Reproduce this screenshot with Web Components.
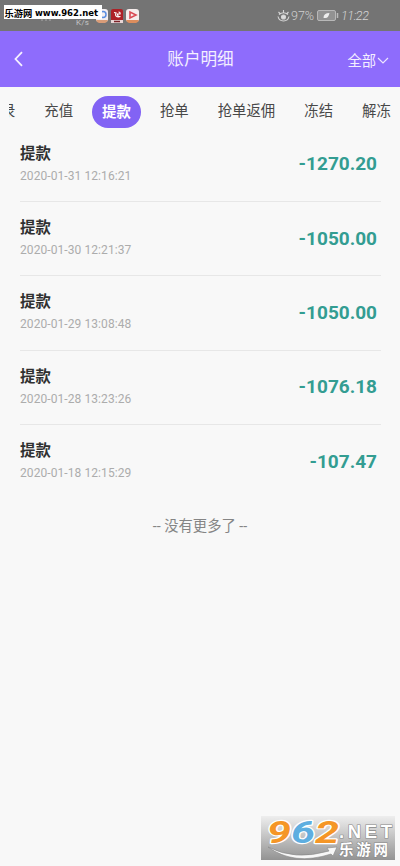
<!DOCTYPE html>
<html lang="zh-CN"><head><meta charset="utf-8"><title>账户明细</title>
<style>
html,body{margin:0;height:100%;overflow:hidden;background:#f8f8f8}
body{font-family:Roboto,"Noto Sans CJK SC",sans-serif}
</style></head><body><account-page></account-page>
<script>
const define=(name,html)=>customElements.define(name,class extends HTMLElement{
  connectedCallback(){
    if(this.shadowRoot)return;
    const t=document.createElement('template');t.innerHTML=html;
    this.attachShadow({mode:'open'}).append(t.content.cloneNode(true));
  }
});
define('status-bar',`<style>
:host{display:flex;height:31px;background:#747474;position:relative;color:#c4c4c4;box-sizing:border-box}
.apps{display:flex;gap:3px;padding:9px 0 0 96px}
.right{display:flex;align-items:center;margin-left:auto;width:123px;padding-top:1px;box-sizing:border-box}
.pct{width:24px;margin:0 2px 0 1px;font:300 12.500px/30px Roboto,sans-serif;color:#d0d0d0}
.time{font:italic 300 12.500px/30px Roboto,sans-serif;margin-left:2px;letter-spacing:-.4px;color:#d4d4d4}
.sig{position:absolute;left:39px;top:16px}.ks{position:absolute;left:76px;top:18px;font:8px/9px Roboto,sans-serif;letter-spacing:.2px}
.mark{position:absolute;left:4px;top:5px;width:98px;height:14px;background:#fff}
svg{display:block;flex:none}
</style>
<svg class="sig" width="32" height="6"><path d="M2 4h2M6 4h2M10 4h2M23 1l2 3 2-3M29 1v3" stroke="#aaa" fill="none"/></svg>
<span class="ks">K/s</span>
<div class="apps">
<svg width="12" height="14"><rect width="12" height="13" rx="3" fill="#f4eef0"/><circle cx="7" cy="5.5" r="3" fill="none" stroke="#5b8ee0" stroke-width="1.5"/><path d="M0 11h12q-1 3-3 3H3q-2 0-3-3" fill="#d99c78"/></svg>
<svg width="12" height="14"><rect width="12" height="14" rx="2" fill="#ad2026"/><path d="M3 3.500l2 .5q-1.500 4 3 4M7.500 3q2 0 1.500 2H6.500q0 3 3 2.500" stroke="#fff" stroke-width="1.200" fill="none"/><path d="M0 11h12v3H0z" fill="#e8d5d5"/><path d="M3 12.500h6" stroke="#7b2228" stroke-width="1.500"/></svg>
<svg width="14" height="14"><rect width="13" height="13" rx="3" fill="#f6edec"/><path d="M4 3v6l6-3z" fill="none" stroke="#d94b55" stroke-width="1.600"/><path d="M0 11h13q-1 3-3 3H3q-2 0-3-3" fill="#dc8d5d"/></svg>
</div>
<div class="right"><svg width="13" height="12" fill="none" stroke="#d6d6d6" stroke-width="1.100"><path d="M1 6.500q1 4.500 5.500 4.500t5.500-4.500M2 4.500q4.500-3.500 9 0M1.500 2l2 2M6.500 0v3M11.500 2l-2 2"/><circle cx="6.500" cy="7" r="2" fill="#ddd"/></svg>
<span class="pct">97%</span>
<svg width="22" height="12"><rect x=".5" y=".5" width="18" height="10" rx="1.500" fill="#929292" stroke="#b8b8b8"/><path d="M6.500 8q0-5 6-5-1 5-4 5z" fill="#eee"/><path d="M20.500 3v5" stroke="#bbb" stroke-width="1.500"/></svg><span class="time">11:22</span></div>
<svg class="mark" width="98" height="14"><text x=".5" y="11.500" font-family="Noto Sans CJK SC" font-weight="700" font-size="9.300">乐游网</text><text x="31" y="11" font-family="DejaVu Sans" font-weight="700" font-size="9.200" textLength="63" lengthAdjust="spacingAndGlyphs">www.962.net</text></svg>`);
define('nav-bar',`<style>
:host{display:grid;grid-template-columns:1fr auto 1fr;align-items:center;height:56px;background:#8e6cfc;color:#f4efff;box-sizing:border-box}
.title{font-size:16.600px;line-height:24px;padding:2px 0 0 1px}
.filter{justify-self:end;display:flex;align-items:center;gap:1px;padding-right:11px;font-size:14.300px;line-height:20px;margin-top:3px}
svg{display:block}.back{margin-left:13px}
</style><svg class="back" width="11" height="16"><path d="M9 1.200L2.500 8l6.500 6.800" fill="none" stroke="#f6f1ff" stroke-width="1.800"/></svg>
<div class="title"><slot></slot></div>
<div class="filter"><slot name="filter"></slot><svg width="12" height="8"><path d="M1 1l5 5 5-5" fill="none" stroke="#ede6ff" stroke-width="1.200"/></svg></div>`);
define('tab-strip',`<style>
:host{display:flex;height:42px;padding-top:9px;margin-left:9px;overflow:hidden;box-sizing:border-box}
div{display:flex;gap:9px;margin-left:-32.500px;white-space:nowrap}
</style><div><slot></slot></div>`);
define('tab-item',`<style>
:host{display:block;flex:none;height:32px;padding:0 10px;border-radius:17px;font-size:14.400px;line-height:32px;color:#484848;box-sizing:border-box}
:host([active]){background:#8263f4;color:#fff;font-weight:700}
:host([active]) span{padding-top:1px}
span{display:block}
</style><span><slot></slot></span>`);
define('record-row',`<style>
:host{display:flex;justify-content:space-between;align-items:center;height:74.400px;margin:0 19px 0 20px;padding-right:4px;border-bottom:1px solid #e7e7e7;box-sizing:border-box}
:host(:last-of-type){border-color:transparent}
.title{font-weight:700;font-size:15.400px;line-height:24px;color:#303030}
.info{margin-top:-3px}
.date{font-size:12px;line-height:16px;margin-top:2px;color:#acacac;letter-spacing:.08px}
.amt{font-weight:700;font-size:19px;line-height:24px;color:#339d92}
</style><div class="info"><div class="title"><slot></slot></div><div class="date"><slot name="date"></slot></div></div><div class="amt"><slot name="amount"></slot></div>`);
define('site-mark',`<style>:host{position:absolute;left:261px;top:816px;display:block}svg{display:block}</style>
<svg width="134" height="44" viewBox="0 0 134 44"><defs><linearGradient id="g" x2="0" y2="1"><stop stop-color="#eee"/><stop offset="1" stop-color="#939393"/></linearGradient></defs>
<rect width="134" height="44" fill="url(#g)"/>
<g font-family="Roboto" font-weight="700" font-style="italic" font-size="32" stroke="#fff" stroke-width="2.400" paint-order="stroke" stroke-linejoin="round">
<text x="6" y="27" fill="#f59626" textLength="24" lengthAdjust="spacingAndGlyphs">9</text><text x="30" y="27" fill="#5eaee0" textLength="24" lengthAdjust="spacingAndGlyphs">6</text><text x="54" y="27" fill="#f59626" textLength="24" lengthAdjust="spacingAndGlyphs">2</text></g>
<path d="M7 31Q34 45 68 35L66 32 76 31 72 40 70 38Q33 50 7 31" fill="#f7f7f7" stroke="#888" stroke-width=".6"/>
<g fill="#fff" stroke="#888" stroke-width="1.200" paint-order="stroke" font-weight="700"><text x="78" y="22" font-family="Liberation Sans" font-size="18.500" textLength="53" lengthAdjust="spacing">.NET</text><text x="78" y="39" font-family="Noto Sans CJK SC" font-size="14.500" textLength="49">乐游网</text></g></svg>`);
define('account-page',`<style>
:host{display:block;position:relative;width:400px;height:866px;background:#f8f8f8;overflow:hidden}
tab-strip{margin-bottom:-1.500px}
.end{text-align:center;font-size:14.300px;line-height:20px;color:#858585;margin-top:16.500px}
</style><status-bar></status-bar><nav-bar>账户明细<span slot="filter">全部</span></nav-bar>
<tab-strip><tab-item>记录</tab-item><tab-item>充值</tab-item><tab-item active>提款</tab-item><tab-item>抢单</tab-item><tab-item>抢单返佣</tab-item><tab-item>冻结</tab-item><tab-item>解冻</tab-item></tab-strip>
${[['01-31 12:16:21','1270.20'],['01-30 12:21:37','1050.00'],['01-29 13:08:48','1050.00'],['01-28 13:23:26','1076.18'],['01-18 12:15:29','107.47']].map(([d,a])=>`<record-row>提款<span slot="date">2020-${d}</span><span slot="amount">-${a}</span></record-row>`).join('')}
<div class="end">-- 没有更多了 --</div><site-mark></site-mark>`);
</script></body></html>
